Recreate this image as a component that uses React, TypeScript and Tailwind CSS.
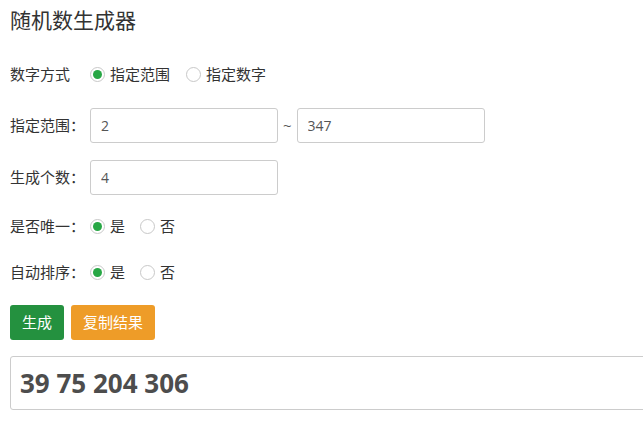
import { useState } from 'react';

const font = { fontFamily: '"Open Sans", "Noto Sans CJK SC", sans-serif' };

function Radio({ checked, label, onClick }: { checked: boolean; label: string; onClick: () => void }) {
  return (
    <label onClick={onClick} className="flex items-center cursor-pointer mr-[6px]">
      <span className="w-[15px] h-[15px] rounded-full border border-[#c8c8c8] bg-white flex items-center justify-center mr-[5px]">
        {checked && <span className="w-[9px] h-[9px] rounded-full bg-[#28a745]" />}
      </span>
      <span>{label}</span>
    </label>
  );
}

function Label({ children }: { children: string }) {
  return <div className="w-[80px] shrink-0">{children}</div>;
}

export default function App() {
  const [mode, setMode] = useState('range');
  const [unique, setUnique] = useState(true);
  const [sorted, setSorted] = useState(true);

  return (
    <div className="w-[643px] h-[428px] overflow-hidden bg-white text-[15px] text-[#333]" style={font}>
      <div className="pl-[10px] pt-[6px]">
        <h1 className="text-[21px] leading-[28px] text-[#333] font-normal">随机数生成器</h1>

        <div className="flex items-center h-[24px] mt-[28px]">
          <Label>数字方式</Label>
          <Radio checked={mode === 'range'} label="指定范围" onClick={() => setMode('range')} />
          <span className="w-[10px]" />
          <Radio checked={mode === 'list'} label="指定数字" onClick={() => setMode('list')} />
        </div>

        <div className="flex items-center mt-[22px]">
          <Label>指定范围：</Label>
          <input
            defaultValue="2"
            className="w-[188px] h-[35px] border border-[#ccc] rounded-[3px] px-[10px] text-[14px] text-[#555] outline-none"
          />
          <span className="mx-[5px] text-[#555]">~</span>
          <input
            defaultValue="347"
            className="w-[188px] h-[35px] border border-[#ccc] rounded-[3px] px-[10px] text-[14px] text-[#555] outline-none"
          />
        </div>

        <div className="flex items-center mt-[17px]">
          <Label>生成个数：</Label>
          <input
            defaultValue="4"
            className="w-[188px] h-[35px] border border-[#ccc] rounded-[3px] px-[10px] text-[14px] text-[#555] outline-none"
          />
        </div>

        <div className="flex items-center h-[24px] mt-[19px]">
          <Label>是否唯一：</Label>
          <Radio checked={unique} label="是" onClick={() => setUnique(true)} />
          <span className="w-[9px]" />
          <Radio checked={!unique} label="否" onClick={() => setUnique(false)} />
        </div>

        <div className="flex items-center h-[24px] mt-[22px]">
          <Label>自动排序：</Label>
          <Radio checked={sorted} label="是" onClick={() => setSorted(true)} />
          <span className="w-[9px]" />
          <Radio checked={!sorted} label="否" onClick={() => setSorted(false)} />
        </div>

        <div className="flex gap-[7px] mt-[21px]">
          <button className="h-[35px] px-[12px] rounded-[3px] bg-[#24913f] text-white">生成</button>
          <button className="h-[35px] px-[12px] rounded-[3px] bg-[#ee9c28] text-white">复制结果</button>
        </div>

        <div className="mt-[16px] w-[700px] h-[54px] border border-[#ccc] rounded-[3px] flex items-center px-[9px]">
          <span className="text-[26px] font-bold text-[#4d4d4d]">39 75 204 306</span>
        </div>
      </div>
    </div>
  );
}
